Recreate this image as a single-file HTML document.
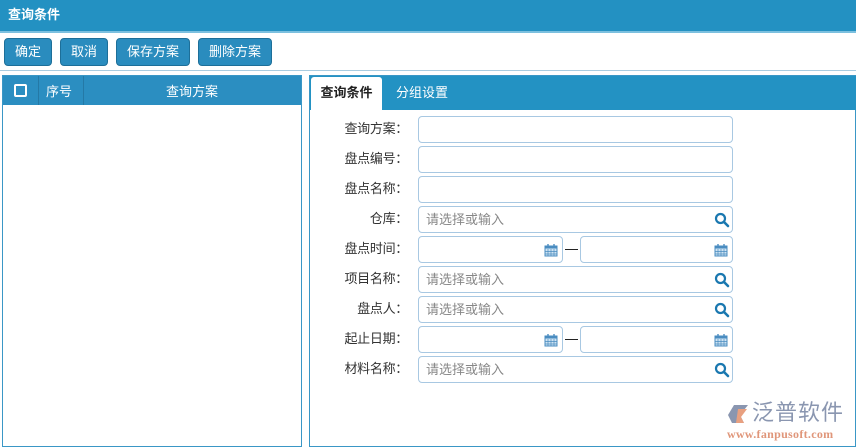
<!DOCTYPE html><html><head><meta charset="utf-8"><style>
*{box-sizing:border-box;margin:0;padding:0}
body{width:856px;height:447px;background:#fff;font-family:"Liberation Sans","Noto Sans CJK SC",sans-serif;font-size:13px;position:relative;overflow:hidden;color:#333}
.a{position:absolute}
.title{left:0;top:0;width:856px;background:#2391c2;color:#fff;font-weight:bold;line-height:29px;padding-left:8px;border-bottom:2px solid #7cc0df;height:33px}
.btn{top:38px;height:28px;background:#2a8cbe;border:1px solid #1d6f99;border-radius:4px;color:#fff;line-height:26px;text-align:center;font-size:13px}
.sep{left:0;top:70px;width:856px;height:1px;background:#a9cce0}
.lp{left:2px;top:75px;width:300px;height:372px;border:1px solid #3a97c6}
.lh{left:3px;top:76px;width:298px;height:29px;background:#2b8ec1;color:#fff}
.rp{left:309px;top:75px;width:547px;height:372px;border:1px solid #3a97c6}
.tb{left:310px;top:76px;width:546px;height:34px;background:#2392c3}
.lbl{width:112px;left:296px;text-align:right;font-size:13px;color:#333;line-height:26px;letter-spacing:-.3px}
.in{left:418px;width:315px;height:27px;border:1px solid #a8c8e2;border-radius:4px;background:#fff;color:#888;line-height:25px;padding-left:7px;font-size:13px}
.d1{left:418px;width:145px}.d2{left:580px;width:153px}
</style></head><body>
<div class="a title">查询条件</div>
<div class="a btn" style="left:4px;width:48px">确定</div>
<div class="a btn" style="left:60px;width:48px">取消</div>
<div class="a btn" style="left:116px;width:74px">保存方案</div>
<div class="a btn" style="left:198px;width:74px">删除方案</div>
<div class="a sep"></div>
<div class="a lp"></div>
<div class="a lh">
 <div class="a" style="left:11px;top:8px;width:13px;height:13px;border:2px solid #fff;border-radius:2px"></div>
 <div class="a" style="left:35px;top:0;width:1px;height:29px;background:#2479a6"></div>
 <div class="a" style="left:43px;top:5px">序号</div>
 <div class="a" style="left:80px;top:0;width:1px;height:29px;background:#2479a6"></div>
 <div class="a" style="left:163px;top:5px">查询方案</div>
</div>
<div class="a rp"></div>
<div class="a tb">
 <div class="a" style="left:1px;top:1px;width:71px;height:34px;background:#fff;border-radius:3px 3px 0 0;color:#222;font-weight:bold;text-align:center;line-height:32px">查询条件</div>
 <div class="a" style="left:86px;top:0;color:#fff;line-height:34px">分组设置</div>
</div>
<svg width="0" height="0" style="position:absolute"><defs>
<symbol id="q" viewBox="0 0 16 16"><circle cx="6.5" cy="6.5" r="4.5" fill="none" stroke="#1a78b0" stroke-width="2.2"/><path d="M10 10l4 4" stroke="#1a78b0" stroke-width="2.6" stroke-linecap="round"/></symbol>
<symbol id="c" viewBox="0 0 14 14"><rect x="1" y="3" width="12" height="10" fill="#cfe4f3" stroke="#4a8cc0"/><rect x="1" y="3" width="12" height="2.5" fill="#4a8cc0"/><path d="M4 6v7M7 6v7M10 6v7M1 8.5h12M1 11h12" stroke="#4a8cc0" stroke-width=".7"/><path d="M4 1v3M10 1v3" stroke="#4a8cc0" stroke-width="1.4"/></symbol>
</defs></svg>
<div class="a lbl" style="top:116px">查询方案：</div><div class="a in" style="top:116px"></div>
<div class="a lbl" style="top:146px">盘点编号：</div><div class="a in" style="top:146px"></div>
<div class="a lbl" style="top:176px">盘点名称：</div><div class="a in" style="top:176px"></div>
<div class="a lbl" style="top:206px">仓库：</div><div class="a in" style="top:206px">请选择或输入<svg class="a" style="right:2px;top:5px" width="16" height="16"><use href="#q"/></svg></div>
<div class="a lbl" style="top:236px">盘点时间：</div><div class="a in d1" style="top:236px"><svg class="a" style="right:4px;top:6px" width="14" height="14"><use href="#c"/></svg></div>
<div class="a" style="left:565px;top:249px;width:13px;height:1px;background:#222"></div>
<div class="a in d2" style="top:236px"><svg class="a" style="right:4px;top:6px" width="14" height="14"><use href="#c"/></svg></div>
<div class="a lbl" style="top:266px">项目名称：</div><div class="a in" style="top:266px">请选择或输入<svg class="a" style="right:2px;top:5px" width="16" height="16"><use href="#q"/></svg></div>
<div class="a lbl" style="top:296px">盘点人：</div><div class="a in" style="top:296px">请选择或输入<svg class="a" style="right:2px;top:5px" width="16" height="16"><use href="#q"/></svg></div>
<div class="a lbl" style="top:326px">起止日期：</div><div class="a in d1" style="top:326px"><svg class="a" style="right:4px;top:6px" width="14" height="14"><use href="#c"/></svg></div>
<div class="a" style="left:565px;top:339px;width:13px;height:1px;background:#222"></div>
<div class="a in d2" style="top:326px"><svg class="a" style="right:4px;top:6px" width="14" height="14"><use href="#c"/></svg></div>
<div class="a lbl" style="top:356px">材料名称：</div><div class="a in" style="top:356px">请选择或输入<svg class="a" style="right:2px;top:5px" width="16" height="16"><use href="#q"/></svg></div>
<svg class="a" style="left:726px;top:403px" width="26" height="22"><path d="M8 2h14l-8 10 4 8H6L2 12z" fill="#8a96b0"/><path d="M12 6h9l-6 8 3 6h-8z" fill="#e8a080"/></svg>
<div class="a" style="left:752px;top:400px;font-size:22px;color:#8a96b0;line-height:26px;letter-spacing:1px">泛普软件</div>
<div class="a" style="left:727px;top:427px;font-size:12px;color:#e0967a;font-family:'Liberation Serif',serif;font-weight:bold;letter-spacing:.3px">www.fanpusoft.com</div>
</body></html>
